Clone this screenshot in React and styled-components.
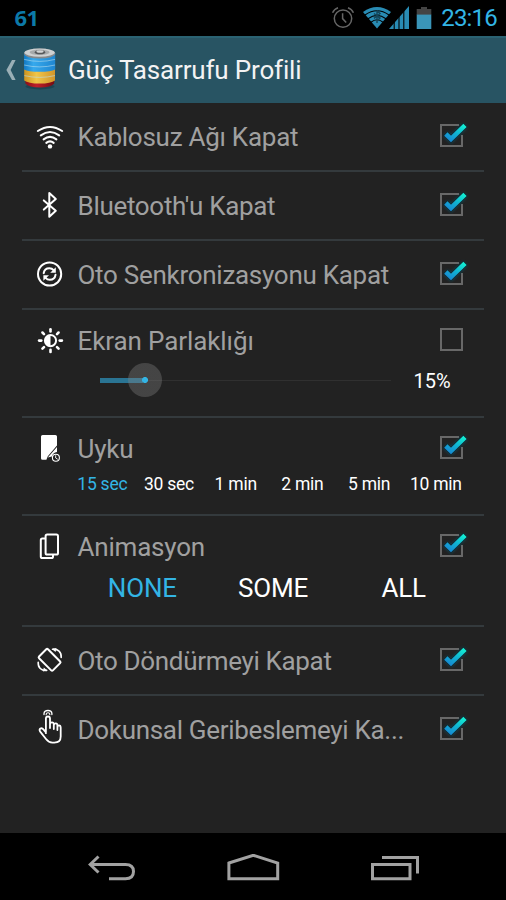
import React, { useState } from "react";
import styled, { createGlobalStyle } from "styled-components";

const SLEEP_OPTIONS = ["15 sec", "30 sec", "1 min", "2 min", "5 min", "10 min"];
const ANIMATION_OPTIONS = ["NONE", "SOME", "ALL"];

function WifiIcon() {
  return (
    <RowIcon viewBox="0 0 40 59">
      <path d="M7.8 25Q20 16.8 32.2 25" />
      <path d="M10.8 29.4Q20 22.6 29.2 29.4" />
      <path d="M13.6 33.4Q20 28.4 26.4 33.4" />
      <path d="M16.3 36.9Q20 33.9 23.7 36.9" />
      <circle cx="20" cy="40.4" r="2.2" fill="#fff" stroke="none" />
    </RowIcon>
  );
}

function BluetoothIcon() {
  return (
    <RowIcon viewBox="0 0 40 59">
      <path d="M13.8 25.4L25.8 35.8L19.3 41.8V18L25.8 24L13.8 34.6" />
    </RowIcon>
  );
}

function SyncIcon() {
  return (
    <RowIcon viewBox="0 0 40 59">
      <circle cx="19.6" cy="30" r="11.6" />
      <path d="M13.7 29.2C14.2 25.8 16.6 24.3 19.4 24.3C21.2 24.3 22.6 25 23.6 26.2" />
      <path d="M25.5 30.8C25 34.2 22.6 35.7 19.8 35.7C18 35.7 16.6 35 15.6 33.8" />
      <path d="M25.8 23.2V28.8H20.2Z" fill="#fff" stroke="none" />
      <path d="M13.4 36.8V31.2H19Z" fill="#fff" stroke="none" />
    </RowIcon>
  );
}

function BrightnessIcon() {
  return (
    <RowIcon viewBox="0 0 40 59">
      <circle cx="20.5" cy="30.6" r="5.6" />
      <path d="M20.5 25A5.6 5.6 0 0 0 20.5 36.2Z" fill="#fff" stroke="none" />
      {[0, 45, 90, 135, 180, 225, 270, 315].map((angle) => (
        <path
          key={angle}
          d="M20.5 19.2V21.4"
          strokeWidth="2.6"
          transform={`rotate(${angle} 20.5 30.6)`}
        />
      ))}
    </RowIcon>
  );
}

function SleepIcon() {
  return (
    <RowIcon viewBox="0 0 40 59">
      <path d="M12.6 17H25.4Q27 17 27 18.6V27.4L17.8 38.2L16.4 41.8H12.6Q11 41.8 11 40.2V18.6Q11 17 12.6 17Z" fill="#fff" stroke="none" />
      <path d="M27 29V34Q22.8 34.6 21.8 38.5L17.8 39.5Z" fill="#fff" stroke="none" />
      <circle cx="25.9" cy="39.8" r="3.5" strokeWidth="1.1" />
      <path d="M25.7 37.7V40L27.4 41.1" strokeWidth="0.9" />
    </RowIcon>
  );
}

function AnimationIcon() {
  return (
    <RowIcon viewBox="0 0 40 59">
      <rect x="15.6" y="18.6" width="12.4" height="20" rx="1.6" />
      <path d="M15 22.6H12.4Q10.8 22.6 10.8 24.2V40.4Q10.8 42 12.4 42H21.4Q23 42 23 40.4V39.2" />
    </RowIcon>
  );
}

function RotateIcon() {
  return (
    <RowIcon viewBox="0 0 40 59">
      <rect x="13.3" y="20" width="12.6" height="19.6" rx="1.2" transform="rotate(-45 19.6 29.8)" />
      <path d="M22.5 19.2C28 18.8 31.6 22 31.2 27.5" strokeWidth="1.6" />
      <path d="M22 19.2L26.4 18L25.6 22Z" fill="#fff" stroke="none" />
      <path d="M16.7 40.4C11.2 40.8 7.8 37.6 8.2 32.2" strokeWidth="1.6" />
      <path d="M17.4 40.4L13 41.6L13.8 37.6Z" fill="#fff" stroke="none" />
    </RowIcon>
  );
}

function TouchIcon() {
  return (
    <RowIcon viewBox="0 0 40 59">
      <path
        d="M15.9 34.2V19.6Q15.9 17.5 18 17.5Q20 17.5 20 19.6V29M20 28.5V25.4Q20 23.3 22 23.3Q23.8 23.3 23.8 25.4V30M23.8 28V26.2Q24 24.4 25.8 24.4Q27.4 24.4 27.4 26.4V31M27.4 28.6Q27.5 26.3 29 26.3Q30.7 26.3 30.7 28.8V37.5Q30.7 43.6 24.3 43.6H22.4Q18.8 43.6 16 40L10 32.4Q9 30.6 10.4 29.6Q12 28.6 13.4 30.4L15.9 33.4"
        strokeWidth="1.8"
      />
      <path d="M14 15.5V14.6Q14.2 11.5 18 11.5Q21.7 11.5 21.9 14.6V15.5" strokeWidth="1.3" />
      <path d="M16.2 15.8V15Q16.4 13.8 18 13.8Q19.6 13.8 19.8 15V15.8" strokeWidth="1.1" />
    </RowIcon>
  );
}

function AlarmIcon() {
  return (
    <svg width="24" height="24" viewBox="0 0 24 24" fill="none" stroke="#666" strokeWidth="1.5">
      <circle cx="12" cy="12.6" r="8.7" />
      <path d="M11.6 7.2V12.6L15.2 16.6M1.6 6.8Q3 3.2 7 1.7M22.4 6.8Q21 3.2 17 1.7" />
    </svg>
  );
}

function StatusWifiIcon() {
  return (
    <svg width="30" height="24" viewBox="0 0 30 24">
      <path d="M15 22.4L1 6Q15 -4 29 6Z" fill="#298cb4" />
      <g fill="none" stroke="#000" strokeWidth="1.1">
        <path d="M3 9Q15 0.4 27 9" />
        <path d="M6 12.8Q15 6 24 12.8" />
        <path d="M9 16.2Q15 11.4 21 16.2" />
      </g>
      <path d="M15 4.5L18 7.5L15.8 9.6L18 12L15 15M15 4.5V17M12 7.5L18 12.4M12 12.4L18 7.5" fill="none" stroke="#14465a" strokeWidth="1.4" />
    </svg>
  );
}

function SignalIcon() {
  return (
    <svg width="20" height="24" viewBox="0 0 20 24">
      <path d="M0 23L20 0V23Z" fill="#298cb4" />
      <path d="M5.2 0V24M10 0V24M14.8 0V24" stroke="#000" strokeWidth="1.1" />
    </svg>
  );
}

function StatusBatteryIcon() {
  return (
    <svg width="16" height="24" viewBox="0 0 16 24">
      <path d="M5 1H11V3H15.3V9H0.7V3H5Z" fill="#444" />
      <path d="M0.7 8.6H15.3V23H0.7Z" fill="#3a95b8" />
    </svg>
  );
}

function BatteryLogo() {
  return (
    <svg width="34" height="44" viewBox="0 0 34 44">
      <defs>
        <linearGradient id="blueCell">
          <stop offset="0" stopColor="#1279c4" />
          <stop offset="0.3" stopColor="#36a9ed" />
          <stop offset="1" stopColor="#1f86d0" />
        </linearGradient>
        <linearGradient id="goldCell">
          <stop offset="0" stopColor="#cf941f" />
          <stop offset="0.4" stopColor="#f0c548" />
          <stop offset="1" stopColor="#d0952a" />
        </linearGradient>
        <linearGradient id="redCell">
          <stop offset="0" stopColor="#8c1018" />
          <stop offset="0.4" stopColor="#c0202a" />
          <stop offset="1" stopColor="#740b12" />
        </linearGradient>
      </defs>
      <ellipse cx="17" cy="38.6" rx="14.5" ry="2.8" fill="#1d4552" />
      <path d="M2.4 30H31.2V35.5Q28 39.6 16.8 39.6Q5.6 39.6 2.4 35.5Z" fill="url(#redCell)" />
      <path d="M1.2 20H32V32.5Q28 35.6 16.6 35.6Q5.2 35.6 1.2 32.5Z" fill="url(#goldCell)" />
      <path d="M1 5H32.2V21.4Q28 23.8 16.6 23.8Q5 23.8 1 21.4Z" fill="url(#blueCell)" />
      <path d="M1.2 11.4Q16.6 15.4 32 11.4M1.2 17Q16.6 20.8 32 17M1.3 27.6Q16.6 31.2 32 27.6" fill="none" stroke="#b7ddec" strokeOpacity="0.65" strokeWidth="0.9" />
      <ellipse cx="16.6" cy="5.6" rx="15.6" ry="5" fill="#85898b" />
      <ellipse cx="16.6" cy="4.6" rx="15.2" ry="4.2" fill="#cfd1d2" />
      <ellipse cx="16.6" cy="4.3" rx="10" ry="2.7" fill="#a6a9aa" />
      <ellipse cx="17" cy="4.3" rx="5.2" ry="2" fill="#56585a" />
      <ellipse cx="17" cy="3.5" rx="3.6" ry="1.3" fill="#d2d4d4" />
    </svg>
  );
}

function CheckBox({ checked, onToggle }) {
  return (
    <CheckButton role="checkbox" aria-checked={checked} onClick={onToggle}>
      <svg width="34" height="35" viewBox="0 0 34 35">
        <defs>
          <linearGradient id="tick" gradientUnits="userSpaceOnUse" x1="14" y1="24" x2="25" y2="6">
            <stop offset="0" stopColor="#1787d2" />
            <stop offset="0.5" stopColor="#10b2d2" />
            <stop offset="1" stopColor="#12ecd2" />
          </linearGradient>
          <filter id="glow" x="-40%" y="-40%" width="180%" height="180%">
            <feGaussianBlur stdDeviation="1.7" />
          </filter>
        </defs>
        <rect x="5" y="7" width="21" height="21" fill="none" stroke="#686868" strokeWidth="2" />
        {checked && (
          <>
            <path d="M23 5.5H28V17H23Z" fill="#222" />
            <path d="M9.8 16L15 21L29 7.4" fill="none" stroke="#0a7795" strokeWidth="5.6" filter="url(#glow)" opacity="0.65" />
            <path d="M9.2 15.4L15 21L29.6 6.8" fill="none" stroke="#13262e" strokeWidth="6.2" />
            <path d="M9.8 16L15 21L29 7.4" fill="none" stroke="url(#tick)" strokeWidth="4.7" />
          </>
        )}
      </svg>
    </CheckButton>
  );
}

function SettingRow({ icon, label, spacing, height = 69, initial = true, children }) {
  const [checked, setChecked] = useState(initial);

  return (
    <Row $height={height} $padded={!children}>
      <RowHead>
        {icon}
        <Label $spacing={spacing}>{label}</Label>
        <CheckBox checked={checked} onToggle={() => setChecked(!checked)} />
      </RowHead>
      {children}
    </Row>
  );
}

function App() {
  const [sleep, setSleep] = useState("15 sec");
  const [animation, setAnimation] = useState("NONE");
  const brightness = 15;

  return (
    <>
      <GlobalStyle />
      <Screen>
        <StatusBar>
          <BatteryLevel>61</BatteryLevel>
          <StatusIcons>
            <AlarmIcon />
            <NetworkIcons>
              <StatusWifiIcon />
              <SignalIcon />
            </NetworkIcons>
            <StatusBatteryIcon />
            <Clock>23:16</Clock>
          </StatusIcons>
        </StatusBar>

        <ActionBar>
          <svg width="10" height="22" viewBox="0 0 10 22">
            <path d="M9.6 1H6L0.4 11L6 21H9.6L4.6 11Z" fill="#9aafb6" />
          </svg>
          <BatteryLogo />
          <Title>Güç Tasarrufu Profili</Title>
        </ActionBar>

        <Settings>
          <SettingRow icon={<WifiIcon />} label="Kablosuz Ağı Kapat" spacing={-0.26} />
          <SettingRow icon={<BluetoothIcon />} label="Bluetooth'u Kapat" spacing={-0.31} />
          <SettingRow icon={<SyncIcon />} label="Oto Senkronizasyonu Kapat" spacing={-0.28} />
          <SettingRow icon={<BrightnessIcon />} label="Ekran Parlaklığı" spacing={-0.1} height={108} initial={false}>
            <SliderRow>
              <Track>
                <Fill style={{ width: `${brightness}%` }} />
                <Thumb style={{ left: `${brightness}%` }} />
              </Track>
              <Percent>{brightness}%</Percent>
            </SliderRow>
          </SettingRow>
          <SettingRow icon={<SleepIcon />} label="Uyku" spacing={-0.2} height={98}>
            <SleepOptions>
              {SLEEP_OPTIONS.map((option) => (
                <SleepOption key={option} $active={option === sleep} onClick={() => setSleep(option)}>
                  {option}
                </SleepOption>
              ))}
            </SleepOptions>
          </SettingRow>
          <SettingRow icon={<AnimationIcon />} label="Animasyon" spacing={-0.2} height={111}>
            <AnimationOptions>
              {ANIMATION_OPTIONS.map((option) => (
                <AnimationOption key={option} $active={option === animation} onClick={() => setAnimation(option)}>
                  {option}
                </AnimationOption>
              ))}
            </AnimationOptions>
          </SettingRow>
          <SettingRow icon={<RotateIcon />} label="Oto Döndürmeyi Kapat" spacing={-0.33} />
          <SettingRow icon={<TouchIcon />} label="Dokunsal Geribeslemeyi Ka..." spacing={-0.31} />
        </Settings>

        <NavBar>
          <svg width="50" height="30" viewBox="0 0 50 30">
            <path d="M4 10.5H38.5Q46.5 10.5 46.5 17.5Q46.5 24.7 38.5 24.7H22M11.5 2.5L3.2 10.5L11.5 18.5" />
          </svg>
          <svg width="54" height="30" viewBox="0 0 54 30">
            <path d="M1.9 9L26.3 1.3L50.7 9V24.7H1.9Z" />
          </svg>
          <svg width="50" height="30" viewBox="0 0 50 30">
            <path d="M2.5 10.4H40V24.8H2.5ZM12 3.5H47.5V19.5" />
          </svg>
        </NavBar>
      </Screen>
    </>
  );
}

const GlobalStyle = createGlobalStyle`
  body {
    margin: 0;
    background: #000;
    font-family: Roboto, "Liberation Sans", sans-serif;
  }

  button {
    padding: 0;
    border: none;
    background: none;
    font-family: inherit;
  }
`;

const Screen = styled.div`
  width: 506px;
  height: 900px;
  display: flex;
  flex-direction: column;
  overflow: hidden;
  background: #222;
`;

const StatusBar = styled.div`
  height: 36px;
  display: flex;
  justify-content: space-between;
  align-items: center;
  padding: 0 9px 0 14.5px;
  background: #000;
`;

const BatteryLevel = styled.div`
  height: 36px;
  font-family: "Open Sans", sans-serif;
  font-size: 22px;
  font-weight: 700;
  letter-spacing: -0.6px;
  line-height: 34px;
  color: #0c79a8;
`;

const StatusIcons = styled.div`
  display: flex;
  align-items: center;
  gap: 7px;
`;

const NetworkIcons = styled.div`
  display: flex;
  svg + svg {
    margin-left: -3px;
  }
`;

const Clock = styled.div`
  margin-left: 2px;
  font-size: 24px;
  letter-spacing: -0.8px;
  line-height: 36px;
  color: #33b5e5;
`;

const ActionBar = styled.div`
  height: 67px;
  box-sizing: border-box;
  display: flex;
  align-items: center;
  padding: 0 0 2px 6px;
  border-top: 2px solid #2a6272;
  background: #285463;

  svg + svg {
    margin-left: 7px;
  }
`;

const Title = styled.div`
  margin-left: 11px;
  font-size: 26px;
  letter-spacing: -0.17px;
  line-height: 30px;
  white-space: nowrap;
  color: #f3f3f3;
`;

const Settings = styled.div`
  flex: 1;
  padding: 0 22px;
`;

const Row = styled.div`
  height: ${(props) => props.$height}px;
  box-sizing: border-box;
  padding-top: ${(props) => (props.$padded ? "3px" : "0")};
  border-bottom: 2px solid #343a3d;

  &:last-child {
    border-bottom: none;
  }
`;

const RowHead = styled.div`
  height: 59px;
  display: flex;
  align-items: center;
  padding: 0 14px 0 8px;
`;

const RowIcon = styled.svg`
  width: 40px;
  height: 59px;
  flex-shrink: 0;
  fill: none;
  stroke: #fff;
  stroke-width: 2;
  stroke-linecap: round;
  stroke-linejoin: round;
`;

const Label = styled.div`
  flex: 1;
  padding: 3px 0 0 7.5px;
  font-size: 26px;
  letter-spacing: ${(props) => props.$spacing}px;
  line-height: 30px;
  white-space: nowrap;
  color: #a0a0a0;
`;

const CheckButton = styled.button`
  width: 34px;
  height: 35px;
  flex-shrink: 0;

  svg {
    display: block;
  }
`;

const SliderRow = styled.div`
  display: flex;
  align-items: center;
  height: 24px;
  margin-left: 77.5px;
`;

const Track = styled.div`
  position: relative;
  top: -1px;
  width: 291px;
  height: 5px;
  background: linear-gradient(#222 2px, #303030 2px, #303030 3px, #222 3px);
`;

const Fill = styled.div`
  height: 100%;
  background: #2a7493;
`;

const Thumb = styled.div`
  position: absolute;
  top: 50%;
  width: 34px;
  height: 34px;
  margin-left: 1.5px;
  border-radius: 50%;
  transform: translate(-50%, -50%);
  background: radial-gradient(circle, #33b5e5 2.6px, rgba(130, 130, 130, 0.36) 3.4px);
`;

const Percent = styled.div`
  margin-left: 23px;
  font-size: 20px;
  line-height: 24px;
  color: #fff;
`;

const SleepOptions = styled.div`
  display: grid;
  grid-template-columns: repeat(6, 66.7px);
  margin-left: 47px;
`;

const Option = styled.button`
  white-space: nowrap;
  color: ${(props) => (props.$active ? "#33b5e5" : "#fff")};
`;

const SleepOption = styled(Option)`
  font-size: 17.5px;
  letter-spacing: -0.25px;
  line-height: 14px;
`;

const AnimationOptions = styled.div`
  display: grid;
  grid-template-columns: repeat(3, 130.7px);
  margin-left: 55px;
`;

const AnimationOption = styled(Option)`
  font-size: 26px;
  letter-spacing: -0.2px;
  line-height: 27px;
`;

const NavBar = styled.div`
  height: 67px;
  box-sizing: border-box;
  display: flex;
  justify-content: space-between;
  align-items: center;
  padding: 4px 86px 0 87px;
  background: #000;

  svg {
    fill: none;
    stroke: #a2a2a2;
    stroke-width: 3;
  }
`;

export default App;
